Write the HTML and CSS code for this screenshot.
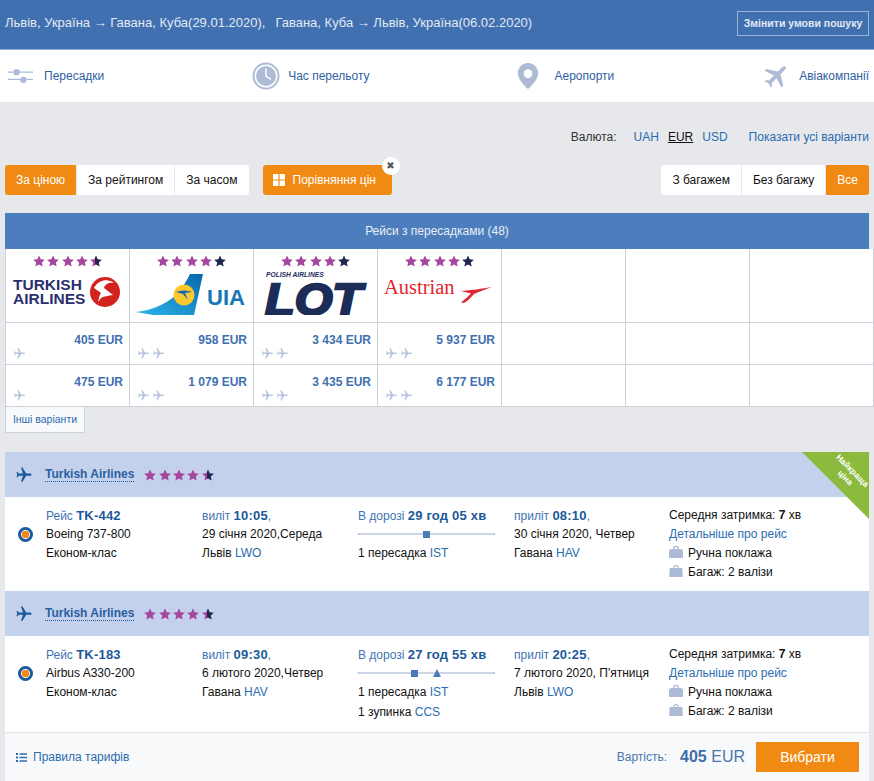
FILE: index.html
```html
<!DOCTYPE html>
<html lang="uk">
<head>
<meta charset="utf-8">
<title>Рейси</title>
<link rel="stylesheet" href="styles.css">
</head>
<body>
<svg class="defs" width="0" height="0" aria-hidden="true">
  <defs>
    <linearGradient id="halfstar"><stop offset="45%" stop-color="#a5469f"/><stop offset="45%" stop-color="#22264f"/></linearGradient>
    <linearGradient id="tail" x1="0" y1="1" x2="1" y2="0"><stop offset="0" stop-color="#2bb5ea"/><stop offset="1" stop-color="#0a67ad"/></linearGradient>
    <symbol id="star" viewBox="0 0 24 24"><path d="M12 .8l3.5 7.6 8.3.9-6.200 5.600 1.700 8.200L12 19l-7.300 4.100 1.700-8.200L.2 9.300l8.300-.9z"/></symbol>
    <symbol id="plane" viewBox="0 0 24 24"><path d="M21 16v-2l-8-5V3.500c0-.83-.67-1.500-1.500-1.500S10 2.670 10 3.500V9l-8 5v2l8-2.500V19l-2 1.500V22l3.500-1 3.500 1v-1.500L13 19v-5.500l8 2.500z"/></symbol>
    <symbol id="bag" viewBox="0 0 14 14"><path d="M0 13V6.500C0 5 1 4 2.500 4H4C4 2 5 .8 7 .8S10 2 10 4h1.500C13 4 14 5 14 6.500V13zM5.300 4h3.400C8.700 2.800 8 2.100 7 2.100S5.300 2.800 5.300 4z"/></symbol>
    <symbol id="case" viewBox="0 0 14 14"><path d="M1 4h12v9H1zM0 5h.6v8H0zM13.400 5h.6v8h-.6zM4.200 4C4.200 2 5 1 7 1s2.800 1 2.800 3H8.700C8.700 2.800 8.200 2.200 7 2.200S5.300 2.800 5.300 4z"/></symbol>
  </defs>
</svg>

<header class="top">
  <div class="route"><span>Львів, Україна → Гавана, Куба(29.01.2020),</span><span>Гавана, Куба → Львів, Україна(06.02.2020)</span></div>
  <a class="change">Змінити умови пошуку</a>
</header>

<nav class="filters">
  <a class="filter">
    <svg class="ficon ficon-s" viewBox="0 0 26 16"><path d="M0 4h26M0 11.500h26" stroke="#aebbd6" stroke-width="1.300"/><circle cx="9" cy="4" r="3.300" fill="#aebbd6"/><circle cx="16" cy="12" r="3.300" fill="#aebbd6"/></svg>
    <span>Пересадки</span>
  </a>
  <a class="filter">
    <svg class="ficon ficon-c" viewBox="0 0 28 28"><circle cx="14" cy="14" r="12.500" fill="#fff" stroke="#aebbd6" stroke-width="2"/><circle cx="14" cy="14" r="10" fill="#aebbd6"/><path d="M14 6.500V14l5 3.500" fill="none" stroke="#fff" stroke-width="1.500"/></svg>
    <span>Час перельоту</span>
  </a>
  <a class="filter">
    <svg class="ficon ficon-p" viewBox="0 0 22 28"><path fill-rule="evenodd" fill="#aebbd6" d="M11 0C5 0 .5 4.600.5 10.500.5 17 7 23 11 27c4-4 10.500-10 10.500-16.500C21.500 4.600 17 0 11 0zm0 6.500a4.500 4.500 0 1 1 0 9 4.500 4.500 0 0 1 0-9z"/></svg>
    <span>Аеропорти</span>
  </a>
  <a class="filter">
    <svg class="ficon ficon-a" viewBox="0 0 24 24"><use href="#plane" class="plane-rot45"/></svg>
    <span>Авіакомпанії</span>
  </a>
</nav>

<div class="currency">
  <span class="cur-label">Валюта:</span>
  <a class="cur">UAH</a><a class="cur cur-on">EUR</a><a class="cur">USD</a>
  <a class="all">Показати усі варіанти</a>
</div>

<div class="toolbar">
  <div class="seg">
    <a class="seg-b on">За ціною</a><a class="seg-b">За рейтингом</a><a class="seg-b">За часом</a>
  </div>
  <a class="compare">
    <svg class="win" viewBox="0 0 12 12"><path d="M0 0h5.400v5.400H0zM6.600 0H12v5.400H6.600zM0 6.600h5.400V12H0zM6.600 6.600H12V12H6.600z" fill="#fff"/></svg>
    Порівняння цін
    <span class="close">✖</span>
  </a>
  <div class="seg seg-right">
    <a class="seg-b">З багажем</a><a class="seg-b">Без багажу</a><a class="seg-b on">Все</a>
  </div>
</div>

<div class="bar">Рейси з пересадками (48)</div>

<div class="matrix">
  <div class="cell logo">
    <div class="stars"><svg><use href="#star"/></svg><svg><use href="#star"/></svg><svg><use href="#star"/></svg><svg><use href="#star"/></svg><svg class="half"><use href="#star"/></svg></div>
    <svg class="brand" viewBox="0 0 124 44">
      <text class="tk" x="8" y="19">TURKISH</text><text class="tk" x="8" y="33">AIRLINES</text>
      <circle cx="100" cy="21" r="15" fill="#d3231f"/>
      <path d="M89 17c4-8 14-10 20-5-5-1-9 1-10 5l9 7c-5 1-9 1-12 3l-3 4c1-5 2-8 3-9z" fill="#fff"/>
    </svg>
  </div>
  <div class="cell logo">
    <div class="stars"><svg><use href="#star"/></svg><svg><use href="#star"/></svg><svg><use href="#star"/></svg><svg><use href="#star"/></svg><svg class="dark"><use href="#star"/></svg></div>
    <svg class="brand" viewBox="0 0 124 44">
      <path d="M7 41c18-2 36-10 46-24 3-5 6-10 8-14h13l-9 41H24z" fill="url(#tail)"/>
      <circle cx="55" cy="24" r="10.500" fill="#fdc82f"/>
      <path d="M47 21c5-2 10-2 16 0l-7 1 3 7-5-6z" fill="#1668ad"/>
      <text class="uia" x="78" y="34">UIA</text>
    </svg>
  </div>
  <div class="cell logo">
    <div class="stars"><svg><use href="#star"/></svg><svg><use href="#star"/></svg><svg><use href="#star"/></svg><svg><use href="#star"/></svg><svg class="dark"><use href="#star"/></svg></div>
    <svg class="brand" viewBox="0 0 124 44">
      <text class="lot-s" x="13" y="6">POLISH AIRLINES</text>
      <text class="lot" x="12" y="44" textLength="97" lengthAdjust="spacingAndGlyphs">LOT</text>
    </svg>
  </div>
  <div class="cell logo">
    <div class="stars"><svg><use href="#star"/></svg><svg><use href="#star"/></svg><svg><use href="#star"/></svg><svg><use href="#star"/></svg><svg class="dark"><use href="#star"/></svg></div>
    <svg class="brand" viewBox="0 0 124 44">
      <text class="aus" x="7" y="23">Austrian</text>
      <path d="M84 20c11-1 20-2 31-4-8 3-14 5-18 7-3 3-6 7-10 9l-3-.500c4-3 8-7 10-9z" fill="#e3262e"/>
    </svg>
  </div>
  <div class="cell"></div><div class="cell"></div><div class="cell"></div>

  <div class="cell price"><b>405 EUR</b><div class="hops"><svg><use href="#plane"/></svg></div></div>
  <div class="cell price"><b>958 EUR</b><div class="hops"><svg><use href="#plane"/></svg><svg><use href="#plane"/></svg></div></div>
  <div class="cell price"><b>3 434 EUR</b><div class="hops"><svg><use href="#plane"/></svg><svg><use href="#plane"/></svg></div></div>
  <div class="cell price"><b>5 937 EUR</b><div class="hops"><svg><use href="#plane"/></svg><svg><use href="#plane"/></svg></div></div>
  <div class="cell"></div><div class="cell"></div><div class="cell"></div>

  <div class="cell price"><b>475 EUR</b><div class="hops"><svg><use href="#plane"/></svg></div></div>
  <div class="cell price"><b>1 079 EUR</b><div class="hops"><svg><use href="#plane"/></svg><svg><use href="#plane"/></svg></div></div>
  <div class="cell price"><b>3 435 EUR</b><div class="hops"><svg><use href="#plane"/></svg><svg><use href="#plane"/></svg></div></div>
  <div class="cell price"><b>6 177 EUR</b><div class="hops"><svg><use href="#plane"/></svg><svg><use href="#plane"/></svg></div></div>
  <div class="cell"></div><div class="cell"></div><div class="cell"></div>
</div>
<a class="more">Інші варіанти</a>

<section class="card">
  <div class="ribbon"><span>Найкраща<br>ціна</span></div>

  <div class="leg-head">
    <svg class="head-plane"><use href="#plane"/></svg>
    <a class="airline">Turkish Airlines</a>
    <div class="stars stars-head"><svg><use href="#star"/></svg><svg><use href="#star"/></svg><svg><use href="#star"/></svg><svg><use href="#star"/></svg><svg class="half"><use href="#star"/></svg></div>
  </div>
  <div class="leg">
    <span class="radio"></span>
    <div class="col">
      <div class="ln first"><span class="lbl">Рейс</span> <b>TK-442</b></div>
      <div class="ln">Boeing 737-800</div>
      <div class="ln">Економ-клас</div>
    </div>
    <div class="col">
      <div class="ln first"><span class="lbl">виліт</span> <b>10:05</b><span class="lbl">,</span></div>
      <div class="ln">29 січня 2020,Середа</div>
      <div class="ln">Львів <a>LWO</a></div>
    </div>
    <div class="col">
      <div class="ln first"><span class="lbl">В дорозі</span> <b>29 год 05 хв</b></div>
      <div class="track"><i class="stop" ></i></div>
      <div class="ln">1 пересадка <a>IST</a></div>
    </div>
    <div class="col">
      <div class="ln first"><span class="lbl">приліт</span> <b>08:10</b><span class="lbl">,</span></div>
      <div class="ln">30 січня 2020, Четвер</div>
      <div class="ln">Гавана <a>HAV</a></div>
    </div>
    <div class="col">
      <div class="ln">Середня затримка: <strong>7</strong> хв</div>
      <div class="ln"><a>Детальніше про рейс</a></div>
      <div class="ln"><svg class="bag"><use href="#bag"/></svg>Ручна поклажа</div>
      <div class="ln"><svg class="bag"><use href="#case"/></svg>Багаж: 2 валізи</div>
    </div>
  </div>

  <div class="leg-head">
    <svg class="head-plane"><use href="#plane"/></svg>
    <a class="airline">Turkish Airlines</a>
    <div class="stars stars-head"><svg><use href="#star"/></svg><svg><use href="#star"/></svg><svg><use href="#star"/></svg><svg><use href="#star"/></svg><svg class="half"><use href="#star"/></svg></div>
  </div>
  <div class="leg leg-2">
    <span class="radio"></span>
    <div class="col">
      <div class="ln first"><span class="lbl">Рейс</span> <b>TK-183</b></div>
      <div class="ln">Airbus A330-200</div>
      <div class="ln">Економ-клас</div>
    </div>
    <div class="col">
      <div class="ln first"><span class="lbl">виліт</span> <b>09:30</b><span class="lbl">,</span></div>
      <div class="ln">6 лютого 2020,Четвер</div>
      <div class="ln">Гавана <a>HAV</a></div>
    </div>
    <div class="col">
      <div class="ln first"><span class="lbl">В дорозі</span> <b>27 год 55 хв</b></div>
      <div class="track"><i class="stop stop-a"></i><i class="tri"></i></div>
      <div class="ln">1 пересадка <a>IST</a></div>
      <div class="ln ln-stop">1 зупинка <a>CCS</a></div>
    </div>
    <div class="col">
      <div class="ln first"><span class="lbl">приліт</span> <b>20:25</b><span class="lbl">,</span></div>
      <div class="ln">7 лютого 2020, П'ятниця</div>
      <div class="ln">Львів <a>LWO</a></div>
    </div>
    <div class="col">
      <div class="ln">Середня затримка: <strong>7</strong> хв</div>
      <div class="ln"><a>Детальніше про рейс</a></div>
      <div class="ln"><svg class="bag"><use href="#bag"/></svg>Ручна поклажа</div>
      <div class="ln"><svg class="bag"><use href="#case"/></svg>Багаж: 2 валізи</div>
    </div>
  </div>

  <footer class="foot">
    <a class="rules"><svg class="list" viewBox="0 0 11 9"><path d="M0 0h2v2H0zM3.500 .3H11v1.400H3.500zM0 3.500h2v2H0zM3.500 3.800H11v1.400H3.500zM0 7h2v2H0zM3.500 7.300H11v1.400H3.500z" fill="#2e6da8"/></svg>Правила тарифів</a>
    <div class="total">
      <span class="t-lbl">Вартість:</span>
      <span class="t-val"><b>405</b> EUR</span>
      <a class="choose">Вибрати</a>
    </div>
  </footer>
</section>
</body>
</html>
```
FILE: styles.css
```css
* { box-sizing: border-box; }
html, body { margin: 0; padding: 0; }
body {
  background: #e6e8ec;
  font-family: "Liberation Sans", Arial, sans-serif;
  font-size: 12px;
  color: #111;
  overflow: hidden;
  height: 781px;
}
a { color: #2b6cb0; text-decoration: none; }
.defs { position: absolute; }

.top {
  height: 50px;
  background: #4070b0;
  border-bottom: 1px solid #8fa9d2;
  display: flex;
  justify-content: space-between;
  padding: 11px 5px 0;
  color: #e3e9f3;
}
.route { font-size: 13px; display: flex; gap: 10px; line-height: 23px; height: 23px; }
.change {
  width: 132px;
  height: 25px;
  border: 1px solid #9db3d6;
  color: #e3e9f3;
  font-size: 10.500px;
  font-weight: bold;
  text-align: center;
  line-height: 23px;
}

.filters {
  height: 52px;
  background: #fff;
  display: flex;
  justify-content: space-between;
  padding: 0 5px 0 8px;
  align-items: center;
}
.filter { display: flex; align-items: center; color: #2f5f9f; }
.ficon { display: block; }
.ficon-s { width: 25px; height: 16px; margin-right: 11px; }
.ficon-c { width: 28px; height: 28px; margin-right: 8px; }
.ficon-p { width: 22px; height: 27px; margin-right: 15px; }
.ficon-a { width: 30px; height: 30px; margin-right: 7px; fill: #aebbd6; }
.plane-rot45 { transform: rotate(45deg); transform-origin: 12px 12px; }

.currency {
  display: flex;
  justify-content: flex-end;
  align-items: center;
  height: 18px;
  margin-top: 26px;
  padding-right: 5px;
}
.cur-label { color: #333; margin-right: 17px; }
.cur { margin-right: 9px; }
.cur-on { color: #111; text-decoration: underline; }
.all { margin-left: 12px; }

.toolbar {
  display: flex;
  align-items: stretch;
  height: 30px;
  margin: 19px 5px 0;
}
.seg { display: flex; gap: 1px; border-radius: 3px; overflow: hidden; }
.seg-right { margin-left: auto; }
.seg-b {
  background: #fff;
  color: #111;
  padding: 0 11px;
  line-height: 30px;
}
.seg-b.on { background: #f18a13; color: #fff; }
.compare {
  position: relative;
  margin-left: 14px;
  width: 129px;
  background: #f18a13;
  color: #fff;
  border-radius: 3px;
  display: flex;
  align-items: center;
  padding-left: 10px;
  gap: 8px;
}
.win { width: 12px; height: 12px; }
.close {
  position: absolute;
  right: -8px;
  top: -8px;
  width: 18px;
  height: 18px;
  background: #fff;
  border-radius: 50%;
  color: #555;
  font-family: "DejaVu Sans", sans-serif;
  font-size: 10px;
  line-height: 18px;
  text-align: center;
}

.bar {
  margin: 18px 5px 0;
  height: 36px;
  background: #4c7dbd;
  color: #e9eef6;
  text-align: center;
  line-height: 36px;
}

.matrix {
  margin: 0 5px;
  display: grid;
  grid-template-columns: repeat(7, 124px);
  grid-template-rows: 74px 42px 42px;
  background: #fff;
  border-left: 1px solid #cdd0d8;
  width: 864px;
}
.cell {
  border-right: 1px solid #cdd0d8;
  border-bottom: 1px solid #cdd0d8;
  background: #fff;
  min-width: 0;
}
.logo { padding-top: 6px; }
.stars { display: flex; justify-content: center; gap: 2.300px; fill: #a5469f; }
.stars svg { width: 12px; height: 12px; display: block; }
.stars .half { fill: url(#halfstar); }
.stars .dark { fill: #22264f; }
.brand { display: block; width: 124px; height: 44px; margin-top: 4px; margin-left: -1px; }
.tk { font: bold 15.500px "Liberation Sans", sans-serif; fill: #2c2f6e; }
.uia { font: bold 22px "Liberation Sans", sans-serif; fill: #1877b8; }
.lot-s { font: italic bold 6.700px "Liberation Sans", sans-serif; fill: #1b2c57; }
.lot { font: italic bold 44px "Liberation Sans", sans-serif; fill: #1b2c57; stroke: #1b2c57; stroke-width: 2.500px; }
.aus { font: 20.500px "Liberation Serif", serif; fill: #e3262e; }

.price { position: relative; text-align: right; padding: 10px 6px 0 0; line-height: 14px; }
.price b { font-size: 12px; font-weight: bold; color: #4070b0; }
.hops { position: absolute; left: 7px; bottom: 4px; display: flex; gap: 2px; fill: #b8c4de; }
.hops svg { width: 13px; height: 13px; display: block; transform: rotate(90deg); }

.more {
  display: block;
  margin-left: 5px;
  width: 80px;
  height: 26px;
  background: #f8f9fa;
  border: 1px solid #cdd0d8;
  border-top: 0;
  font-size: 10.500px;
  line-height: 24px;
  text-align: center;
}

.card {
  position: relative;
  margin: 19px 5px 0;
  width: 864px;
  background: #fff;
}
.ribbon {
  position: absolute;
  right: 0;
  top: 0;
  width: 67px;
  height: 67px;
  background: #8cba3e;
  clip-path: polygon(0 0, 100% 0, 100% 100%);
}
.ribbon span {
  position: absolute;
  left: 22px;
  top: 12px;
  width: 50px;
  color: #fff;
  font-size: 8.500px;
  line-height: 10px;
  text-align: center;
  font-weight: bold;
  transform: rotate(45deg);
}
.leg-head {
  height: 45px;
  background: #c4d1ec;
  display: flex;
  align-items: center;
  padding-left: 10px;
}
.leg-head + .leg { height: 94px; }
.leg.leg-2 { height: 96px; }
.head-plane { width: 18px; height: 18px; fill: #1c5a99; transform: rotate(90deg); margin-right: 12px; }
.airline {
  font-size: 12px;
  font-weight: bold;
  color: #2a5f9e;
  border-bottom: 1px dotted #1c5a99;
  line-height: 14px;
  margin-right: 10px;
}
.stars-head { gap: 2.300px; }
.stars-head svg { width: 12px; height: 12px; }

.leg {
  display: grid;
  grid-template-columns: 156px 156px 156px 155px 1fr;
  padding: 9px 0 0 41px;
  position: relative;
}
.radio {
  position: absolute;
  left: 13px;
  top: 30px;
  width: 15px;
  height: 15px;
  border-radius: 50%;
  border: 3px solid #1c5a99;
  background: radial-gradient(circle, #f18a13 0 3.500px, #fff 4px);
}
.ln { line-height: 19px; height: 19px; white-space: nowrap; }
.ln a { color: #2b6cb0; }
.lbl { color: #3f73b2; }
.first b { font-size: 13px; color: #1c5a99; letter-spacing: .2px; }
.col strong { font-size: 12px; }
.track {
  position: relative;
  height: 19px;
  width: 137px;
}
.track::before {
  content: "";
  position: absolute;
  left: 0;
  right: 0;
  top: 8px;
  height: 2px;
  background: #ccd6e8;
  border-left: 1px solid #aebbd6;
  border-right: 1px solid #aebbd6;
}
.stop {
  position: absolute;
  left: 65px;
  top: 6px;
  width: 7px;
  height: 7px;
  background: #4a7ab8;
}
.stop-a { left: 53px; }
.tri {
  position: absolute;
  left: 75px;
  top: 5px;
  width: 0;
  height: 0;
  border-left: 4.500px solid transparent;
  border-right: 4.500px solid transparent;
  border-bottom: 8px solid #4a7ab8;
}
.ln-stop { margin-top: 1px; }
.bag { width: 14px; height: 14px; fill: #aebbd6; display: inline-block; vertical-align: -2px; margin-right: 5px; }

.foot {
  height: 49px;
  background: #f8f9fa;
  border-top: 1px solid #e4e6ea;
  display: flex;
  justify-content: space-between;
  align-items: center;
  padding: 0 10px 0 11px;
}
.rules { display: flex; align-items: center; color: #2b6cb0; gap: 6px; }
.list { width: 11px; height: 9px; }
.total { display: flex; align-items: center; }
.t-lbl { color: #4a76ae; margin-right: 13px; }
.t-val { font-size: 16px; color: #4a76ae; margin-right: 11px; }
.t-val b { color: #3f6ea9; }
.choose {
  width: 103px;
  height: 30px;
  background: #f18a13;
  color: #fff;
  font-size: 14px;
  line-height: 30px;
  text-align: center;
}
```
